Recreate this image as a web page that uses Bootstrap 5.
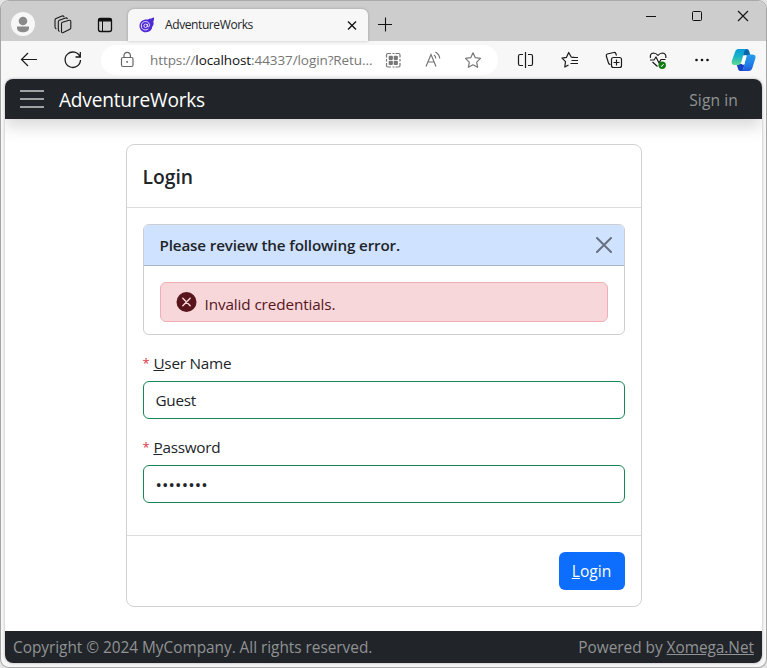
<!DOCTYPE html>
<html lang="en">
<head>
<meta charset="utf-8">
<meta name="viewport" content="width=device-width, initial-scale=1">
<title>AdventureWorks</title>
<link href="https://cdn.jsdelivr.net/npm/bootstrap@5.3.0/dist/css/bootstrap.min.css" rel="stylesheet">
<style>
body{font-family:"Open Sans","Noto Sans",sans-serif;font-size:15.3px;letter-spacing:-.24px;line-height:24px;background:#e4e4e4;color:#212529;overflow:hidden}
svg{display:block;flex:none}
.win{width:767px;height:668px;background:#f7f7f7;border:1px solid #a5a5a5;border-top:1px solid #aaa;border-radius:9px;overflow:hidden}
.strip{height:40px;background:#cdcdcd;padding-left:10px}
.avatar{margin-top:11px}
.ic1{margin:12px 0 0 16px}
.ic2{margin:12px 0 0 18px}
.tab{width:240px;height:32px;margin:8px 0 0 11px;background:#f7f7f7;border-radius:6px 6px 0 0;font-size:12px;letter-spacing:-.4px;padding:0 10px 0 11px;box-shadow:0 0 3px rgba(0,0,0,.25)}
.tabname{padding-left:10px}
.plus{margin:11px 0 0 5px}
.controls{margin-top:4px;gap:22px;padding-right:11px}
.bar{height:38px;padding-left:16px;background:#f7f7f7}
.address{width:397px;height:30px;background:#fff;border-radius:15px;margin-left:16px;padding:0 13px 0 14px;font-size:13.5px;letter-spacing:-.09px;color:#767676}
.address b{font-weight:400;color:#111}
.url{width:231px;padding-left:11px;white-space:nowrap}
.view{margin:0 4px;width:757px;height:584px;background:#fff;border-radius:8px;overflow:hidden;box-shadow:0 0 3px rgba(0,0,0,.3)}
.topnav{height:40px;background:#212529;padding:0 24px 0 15px;box-shadow:0 8px 16px rgba(0,0,0,.15);flex:none}
.title{font-size:19.1px;letter-spacing:-.2px;color:#fff;margin-left:15px;padding-top:2px}
.signin{font-size:15.6px;letter-spacing:.1px;padding-top:1px}
.dim{color:#909294}
.login{width:516px;margin-top:25px;border-color:#d0d1d2;border-radius:8px}
.login>.card-header{height:63px;padding:2px 16px 0;border-color:#dcdddf}
.login h5{font-size:19.300px;font-weight:600;letter-spacing:0}
.login>.card-footer{padding:16px;margin-top:32px;border-color:#dcdddf}
.errs{border-color:#cdced0;height:111px;margin-bottom:16px}
.errs>.card-header{background:#cfe2ff;height:41px;flex:none;border-color:#a6b5cc;padding:0 12px 0 16px;font-weight:600;font-size:15.200px;letter-spacing:-.14px}
.errs>.card-body{padding:16px 16px 0}
.bad{height:40px;background:#f7d7da;border:1px solid #f1aeb5;border-radius:6px;color:#58151c;padding-left:15px;letter-spacing:-.12px}
.msg{padding:4px 0 0 8px}
.fld{height:38px;border-radius:6px;border-color:#198754;padding:6px 12px;font-size:15.3px;letter-spacing:-.3px;line-height:24px}
.pw{font-size:17px;letter-spacing:.15px}
.lbl{margin-bottom:6px;display:block}
.lbl span{color:#dc3545;font-size:13px;margin-right:4px;vertical-align:1px;line-height:1}
.go{width:66px;height:38px;background:#0d6efd;border:0;padding:2px 0 0;font-size:15.6px;letter-spacing:0}
.foot{height:32px;background:#212529;padding:2px 8px 0;flex:none;font-size:15.4px;letter-spacing:-.03px}
</style>
<script src="https://cdn.jsdelivr.net/npm/bootstrap@5.3.0/dist/js/bootstrap.bundle.min.js"></script>
</head>
<body>
<div class="win">
  <div class="strip d-flex align-items-start">
    <svg class="avatar" width="24" height="24"><circle cx="12" cy="12" r="12" fill="#f7f7f7"/><circle cx="12" cy="9" r="4.300" fill="#8a8a8a"/><path d="M6 14.500h12v1.500c0 3-3 4.300-6 4.300s-6-1.300-6-4.300z" fill="#8a8a8a"/></svg>
    <svg class="ic1" width="24" height="24" fill="none" stroke="#1b1b1b" stroke-width="1.100" stroke-linejoin="round" stroke-linecap="round"><path d="M10.500 10.700q0-1 1-1.400l6.500-2q1.800-.5 1.800 1.300v6.200q0 1-1 1.500l-6.500 3.300q-1.800.7-1.800-1.200zM7.300 16.500q0 1.500 1 1.800M7.300 16.500V9q0-1.200 1-1.700l6.200-2.300q1.300-.4 1.800.6M4 13.500q0 1.800 1 2.300M4 13.500V7.200q0-1.200 1-1.700l6-2.500q1.300-.4 2 .7"/></svg>
    <svg class="ic2" width="24" height="24" fill="none" stroke="#111"><rect x="5.500" y="5.500" width="13" height="13" rx="2" stroke-width="1.300"/><path d="M5.500 7h13" stroke-width="3"/><path d="M9.500 8v10"/></svg>
    <div class="tab d-flex align-items-center">
      <svg width="16" height="16"><path d="M15 .5c-2 .2-2 .8-3 1.200-1-.4-2 .3-3 .8C4.500 1.800.3 4.500.5 9c.2 4 3 6.500 6.500 6.300 3.600-.2 6-2.300 6.200-5.500 1.500-1.500 1.900-3.800 1-5 .8-1.300.9-2.500.8-4.300z" fill="#512bd4"/><path d="M9.300 12c-3 2-7 .5-7-3s2.700-4.700 4.900-4.400c2.500.3 3.700 2.400 3.100 4.500-.5 1.300-2.100 1-1.900-.3l.2-1.700" fill="none" stroke="#e8e2ff"/><circle cx="6.600" cy="8.800" r="1.700" fill="none" stroke="#e8e2ff"/></svg>
      <span class="flex-fill tabname">AdventureWorks</span>
      <svg width="12" height="12" stroke="#111" stroke-width="1.300"><path d="M2 2.500l8 8M10 2.500l-8 8"/></svg>
    </div>
    <svg class="plus" width="24" height="24" stroke="#111" stroke-width="1.100"><path d="M5 12.500h14M12.500 5.500v14"/></svg>
    <div class="controls d-flex ms-auto">
      <svg width="24" height="24" stroke="#111"><path d="M7 11.500h10"/></svg>
      <svg width="24" height="24" fill="none" stroke="#111"><rect x="7.500" y="6.500" width="9" height="9" rx="1"/></svg>
      <svg width="24" height="24" stroke="#111" stroke-width="1.100"><path d="M7 6l10 10M17 6L7 16"/></svg>
    </div>
  </div>
  <div class="bar d-flex align-items-center">
    <svg width="24" height="24" fill="none" stroke="#1b1b1b" stroke-width="1.200"><path d="M20 11.500H4.500M11 5L4.500 11.500 11 18"/></svg>
    <svg style="margin-left:20px" width="24" height="24" fill="none" stroke="#1b1b1b" stroke-width="1.300"><path d="M19 9a7.700 7.700 0 1 0 .5 3M19.300 4v5H14.500"/></svg>
    <div class="address d-flex align-items-center">
      <svg width="24" height="24" fill="none" stroke="#666" stroke-width="1.200"><rect x="6.500" y="9.500" width="11.500" height="9" rx="1.500"/><path d="M9 9.500V7.500a3.200 3.200 0 0 1 6.400 0v2"/><rect x="11.700" y="13.500" width="1" height="1" fill="#555" stroke-width=".6"/></svg>
      <div class="url flex-fill">https://<b>localhost</b>:44337/login?Retu...</div>
      <svg width="24" height="24" fill="none" stroke="#777" stroke-width="1.200"><path d="M5.500 9.500V7q0-1.500 1.500-1.500h3M14.500 5.500h3q1.500 0 1.500 1.500v2.500M5.500 11v2.500M19 11v2.500M5.500 15v2.500q0 1.500 1.500 1.500h3M11.500 19h2M11.500 5.500h2M14.500 19h3q1.500 0 1.500-1.500V15"/><rect x="7.700" y="7.800" width="4.200" height="4.200" rx="1" fill="#777" stroke="none"/><rect x="12.700" y="7.800" width="4.200" height="4.200" rx="1" fill="#777" stroke="none"/><rect x="7.700" y="12.700" width="4.200" height="4.200" rx="1" fill="#777" stroke="none"/><rect x="12.700" y="12.700" width="4.200" height="4.200" rx="1" fill="#777" stroke="none"/></svg>
      <svg style="margin-left:16px" width="24" height="24" fill="none" stroke="#777" stroke-width="1.200"><path d="M5 18.500L10 6.500l5 12M6.800 14h6.500M13 7q1.800 1.300 1.800 3.500M14.500 4q4 2.500 4.200 6.500"/></svg>
      <svg style="margin-left:16px" width="24" height="24" fill="none" stroke="#777" stroke-width="1.200" stroke-linejoin="round"><path d="M12 4.800l2.300 4.900 5.200.7-3.800 3.700.9 5.200-4.600-2.500-4.600 2.500.9-5.200-3.800-3.700 5.200-.7z"/></svg>
    </div>
    <svg style="margin-left:15px" width="24" height="24" fill="none" stroke="#1b1b1b" stroke-width="1.200"><path d="M10 6.500H7Q5.500 6.500 5.500 8v8q0 1.500 1.500 1.500h3M15 6.500h3q1.500 0 1.500 1.500v8q0 1.500-1.500 1.500h-3M12.500 4v16"/></svg>
    <svg style="margin-left:21px" width="24" height="24" fill="none" stroke="#1b1b1b" stroke-width="1.200" stroke-linejoin="round"><path d="M16.500 9.300l-3.300-.3-2.500-4.500L8.500 9.300l-4.500.8 3.500 3.500-.7 5.400 3.700-2M13.500 9.500h6.500M13.500 12.500h6.500M12.500 15.500h7.500"/></svg>
    <svg style="margin-left:20px" width="24" height="24" fill="none" stroke="#1b1b1b" stroke-width="1.200"><rect x="9.500" y="9.500" width="10" height="10" rx="2"/><path d="M14.500 11.500v6M11.500 14.500h6M8.500 16.500q-1.500 0-2-1.500L4.300 8q-.3-1.500 1-2l6.500-1.500q1.500-.3 2 1l.7 2"/></svg>
    <svg style="margin-left:20px" width="24" height="24" fill="none" stroke="#1b1b1b" stroke-width="1.200" stroke-linejoin="round"><path d="M4.500 10Q3.500 5.500 7.500 5q2.500 0 4.500 2.300Q14 5 16.500 5q4 .5 3.300 5M4 12h4l2-3 3 6 2-3.500h4.500M6.500 14l5 4.500"/><circle cx="16.200" cy="17.200" r="3.700" fill="#107c10" stroke="none"/><path d="M14.800 17.700l1 .7 1.800-2.300" stroke="#fff" stroke-width="1"/></svg>
    <svg style="margin-left:20px" width="24" height="24" fill="#111"><circle cx="6.500" cy="12" r="1.300"/><circle cx="12" cy="12" r="1.300"/><circle cx="17.500" cy="12" r="1.300"/></svg>
    <svg style="margin-left:17px" width="25" height="24" viewBox="0 0 25 24"><defs><linearGradient id="g1" x1="0" y1="0" x2="0" y2="1"><stop offset="0" stop-color="#079bdf"/><stop offset=".5" stop-color="#1cb5c5"/><stop offset="1" stop-color="#62dc8d"/></linearGradient><linearGradient id="g2" x1="0" y1="0" x2="0" y2="1"><stop offset="0" stop-color="#249ee8"/><stop offset=".6" stop-color="#207ee8"/><stop offset="1" stop-color="#2057d9"/></linearGradient></defs><path d="M11 1h4.500q2.200 0 2.700 2l1.200 4.500h-7z" fill="#0b65aa"/><path d="M5.500 16h8l-1.500 7H9.500q-1.700 0-2.200-1.500z" fill="#1741c7"/><path d="M7.500 1h8.300q-2 0-2.600 2.500L10.500 13.500q-1 3.500-3.500 3.500H3.500q-3.500 0-2.700-4L4 4q1-3 3.500-3z" fill="url(#g1)"/><path d="M17.500 6.500h4q3.800 0 2.800 4L21.500 19.500q-1 3.500-4 3.500H9.800q2 0 2.700-2.500L15 9q.7-2.500 2.500-2.500z" fill="url(#g2)"/><path d="M14.200 8.500L12 15.500" stroke="#fff" stroke-width="2.600" stroke-linecap="round"/></svg>
  </div>
  <div class="view d-flex flex-column">
    <nav class="topnav d-flex align-items-center">
      <svg width="24" height="20" stroke="#a0a2a3" stroke-width="2"><path d="M0 2h24M0 10h24M0 18h24"/></svg>
      <span class="title">AdventureWorks</span>
      <span class="dim ms-auto signin">Sign in</span>
    </nav>
    <main class="flex-fill">
      <div class="card login mx-auto">
        <div class="card-header bg-transparent d-flex align-items-center"><h5 class="m-0">Login</h5></div>
        <div class="card-body p-3 pb-0">
          <div class="card errs">
            <div class="card-header d-flex align-items-center justify-content-between"><span>Please review the following error.</span>
              <svg width="16" height="16" stroke="#687180" stroke-width="2" stroke-linecap="round"><path d="M1 1l14 14M15 1L1 15"/></svg></div>
            <div class="card-body"><div class="bad d-flex align-items-center">
              <svg width="21" height="20"><circle cx="10.500" cy="10" r="10" fill="#58151c"/><path d="M6.800 6.300l7.400 7.400M14.200 6.300l-7.400 7.400" stroke="#f7d7da" stroke-width="1.400" stroke-linecap="round"/></svg>
              <span class="msg">Invalid credentials.</span></div></div>
          </div>
          <label class="lbl" for="user"><span>*</span><u>U</u>ser Name</label>
          <input id="user" class="form-control fld mb-3" value="Guest">
          <label class="lbl" for="pass"><span>*</span><u>P</u>assword</label>
          <input id="pass" type="password" class="form-control fld pw" value="password">
        </div>
        <div class="card-footer bg-transparent d-flex justify-content-end"><button class="btn btn-primary go"><u>L</u>ogin</button></div>
      </div>
    </main>
    <footer class="foot dim d-flex align-items-center justify-content-between"><span>Copyright © 2024 MyCompany. All rights reserved.</span><span>Powered by <u>Xomega.Net</u></span></footer>
  </div>
</div>
</body>
</html>
